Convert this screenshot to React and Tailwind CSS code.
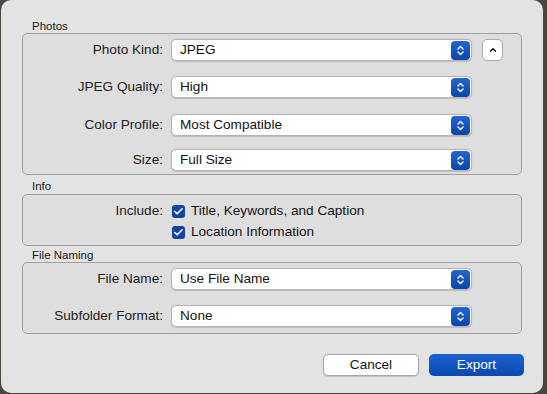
import { Check, ChevronUp } from 'lucide-react';

const font = { fontFamily: '"Liberation Sans", Arial, sans-serif' };

function Stepper() {
    return (
        <div className="w-[19px] h-[19px] rounded-[4px] bg-gradient-to-b from-[#2166d4] to-[#0a45a8] flex flex-col items-center justify-center gap-[1px] mr-[1px]">
            <svg width="7" height="5" viewBox="0 0 7 5" fill="none" stroke="white" strokeWidth="1.4" strokeLinecap="round" strokeLinejoin="round">
                <path d="M1 4 L3.5 1.5 L6 4" />
            </svg>
            <svg width="7" height="5" viewBox="0 0 7 5" fill="none" stroke="white" strokeWidth="1.4" strokeLinecap="round" strokeLinejoin="round">
                <path d="M1 1 L3.5 3.5 L6 1" />
            </svg>
        </div>
    );
}

function Popup({ value }) {
    return (
        <div className="w-[301px] h-[22px] bg-white border border-[#b3b3b3] rounded-[5px] shadow-[0_0.5px_1px_rgba(0,0,0,0.15)] flex items-center justify-between">
            <span className="pl-[8px] text-[13.6px] text-[#141414]">{value}</span>
            <Stepper />
        </div>
    );
}

function Row({ label, value, className = '', extra }) {
    return (
        <div className={`flex items-center h-[22px] ${className}`}>
            <div className="w-[140px] text-right text-[13.6px] text-[#222]">{label}</div>
            <div className="ml-[8px]">
                <Popup value={value} />
            </div>
            {extra}
        </div>
    );
}

function CheckRow({ label, className = '', children }) {
    return (
        <div className={`flex items-center h-[20px] ${className}`}>
            <div className="w-[140px] text-right text-[13.6px] text-[#222]">{label}</div>
            <div className="ml-[9px] w-[13px] h-[13px] rounded-[3px] bg-[#1243a8] flex items-center justify-center">
                <Check className="w-[11px] h-[11px] text-white" strokeWidth={3.5} />
            </div>
            <span className="ml-[6px] text-[13.6px] text-[#141414]">{children}</span>
        </div>
    );
}

function SectionLabel({ children, className = '' }) {
    return <div className={`pl-[31px] text-[11.5px] leading-[14px] text-[#1a1a1a] ${className}`}>{children}</div>;
}

function Group({ children, className = '' }) {
    return (
        <div className={`ml-[21px] w-[500px] border border-[#a0a0a0] rounded-[5px] bg-[#dedede] ${className}`}>
            {children}
        </div>
    );
}

export default function App() {
    return (
        <div className="w-[547px] h-[394px] bg-[#4a4640] overflow-hidden" style={font}>
            <div className="ml-[1px] w-[542px] h-[393px] bg-[#e3e3e3] rounded-[10px] flex flex-col pt-[19px]">
                <SectionLabel>Photos</SectionLabel>
                <Group className="h-[142px] pt-[5px]">
                    <Row
                        label="Photo Kind:"
                        value="JPEG"
                        extra={
                            <div className="ml-[10px] w-[21px] h-[22px] bg-white border border-[#a8a8a8] rounded-[5px] flex items-center justify-center">
                                <ChevronUp className="w-[10px] h-[10px] text-[#111]" strokeWidth={3.5} />
                            </div>
                        }
                    />
                    <Row label="JPEG Quality:" value="High" className="mt-[15px]" />
                    <Row label="Color Profile:" value="Most Compatible" className="mt-[16px]" />
                    <Row label="Size:" value="Full Size" className="mt-[13px]" />
                </Group>

                <SectionLabel className="mt-[4px] mb-[1px]">Info</SectionLabel>
                <Group className="h-[52px] pt-[6px]">
                    <CheckRow label="Include:">Title, Keywords, and Caption</CheckRow>
                    <CheckRow label="" className="mt-[1px]">Location Information</CheckRow>
                </Group>

                <SectionLabel className="mt-[2px]">File Naming</SectionLabel>
                <Group className="h-[72px] pt-[5px]">
                    <Row label="File Name:" value="Use File Name" />
                    <Row label="Subfolder Format:" value="None" className="mt-[15px]" />
                </Group>

                <div className="flex justify-end gap-[10px] pr-[19px] mt-[20px]">
                    <button className="w-[96px] h-[22px] bg-white border border-[#a8a8a8] rounded-[5px] text-[13.6px] text-[#141414] shadow-[0_0.5px_1px_rgba(0,0,0,0.15)]">
                        Cancel
                    </button>
                    <button className="w-[95px] h-[22px] rounded-[5px] bg-gradient-to-b from-[#1c62cf] to-[#0a4aae] text-[13.6px] text-white">
                        Export
                    </button>
                </div>
            </div>
        </div>
    );
}
